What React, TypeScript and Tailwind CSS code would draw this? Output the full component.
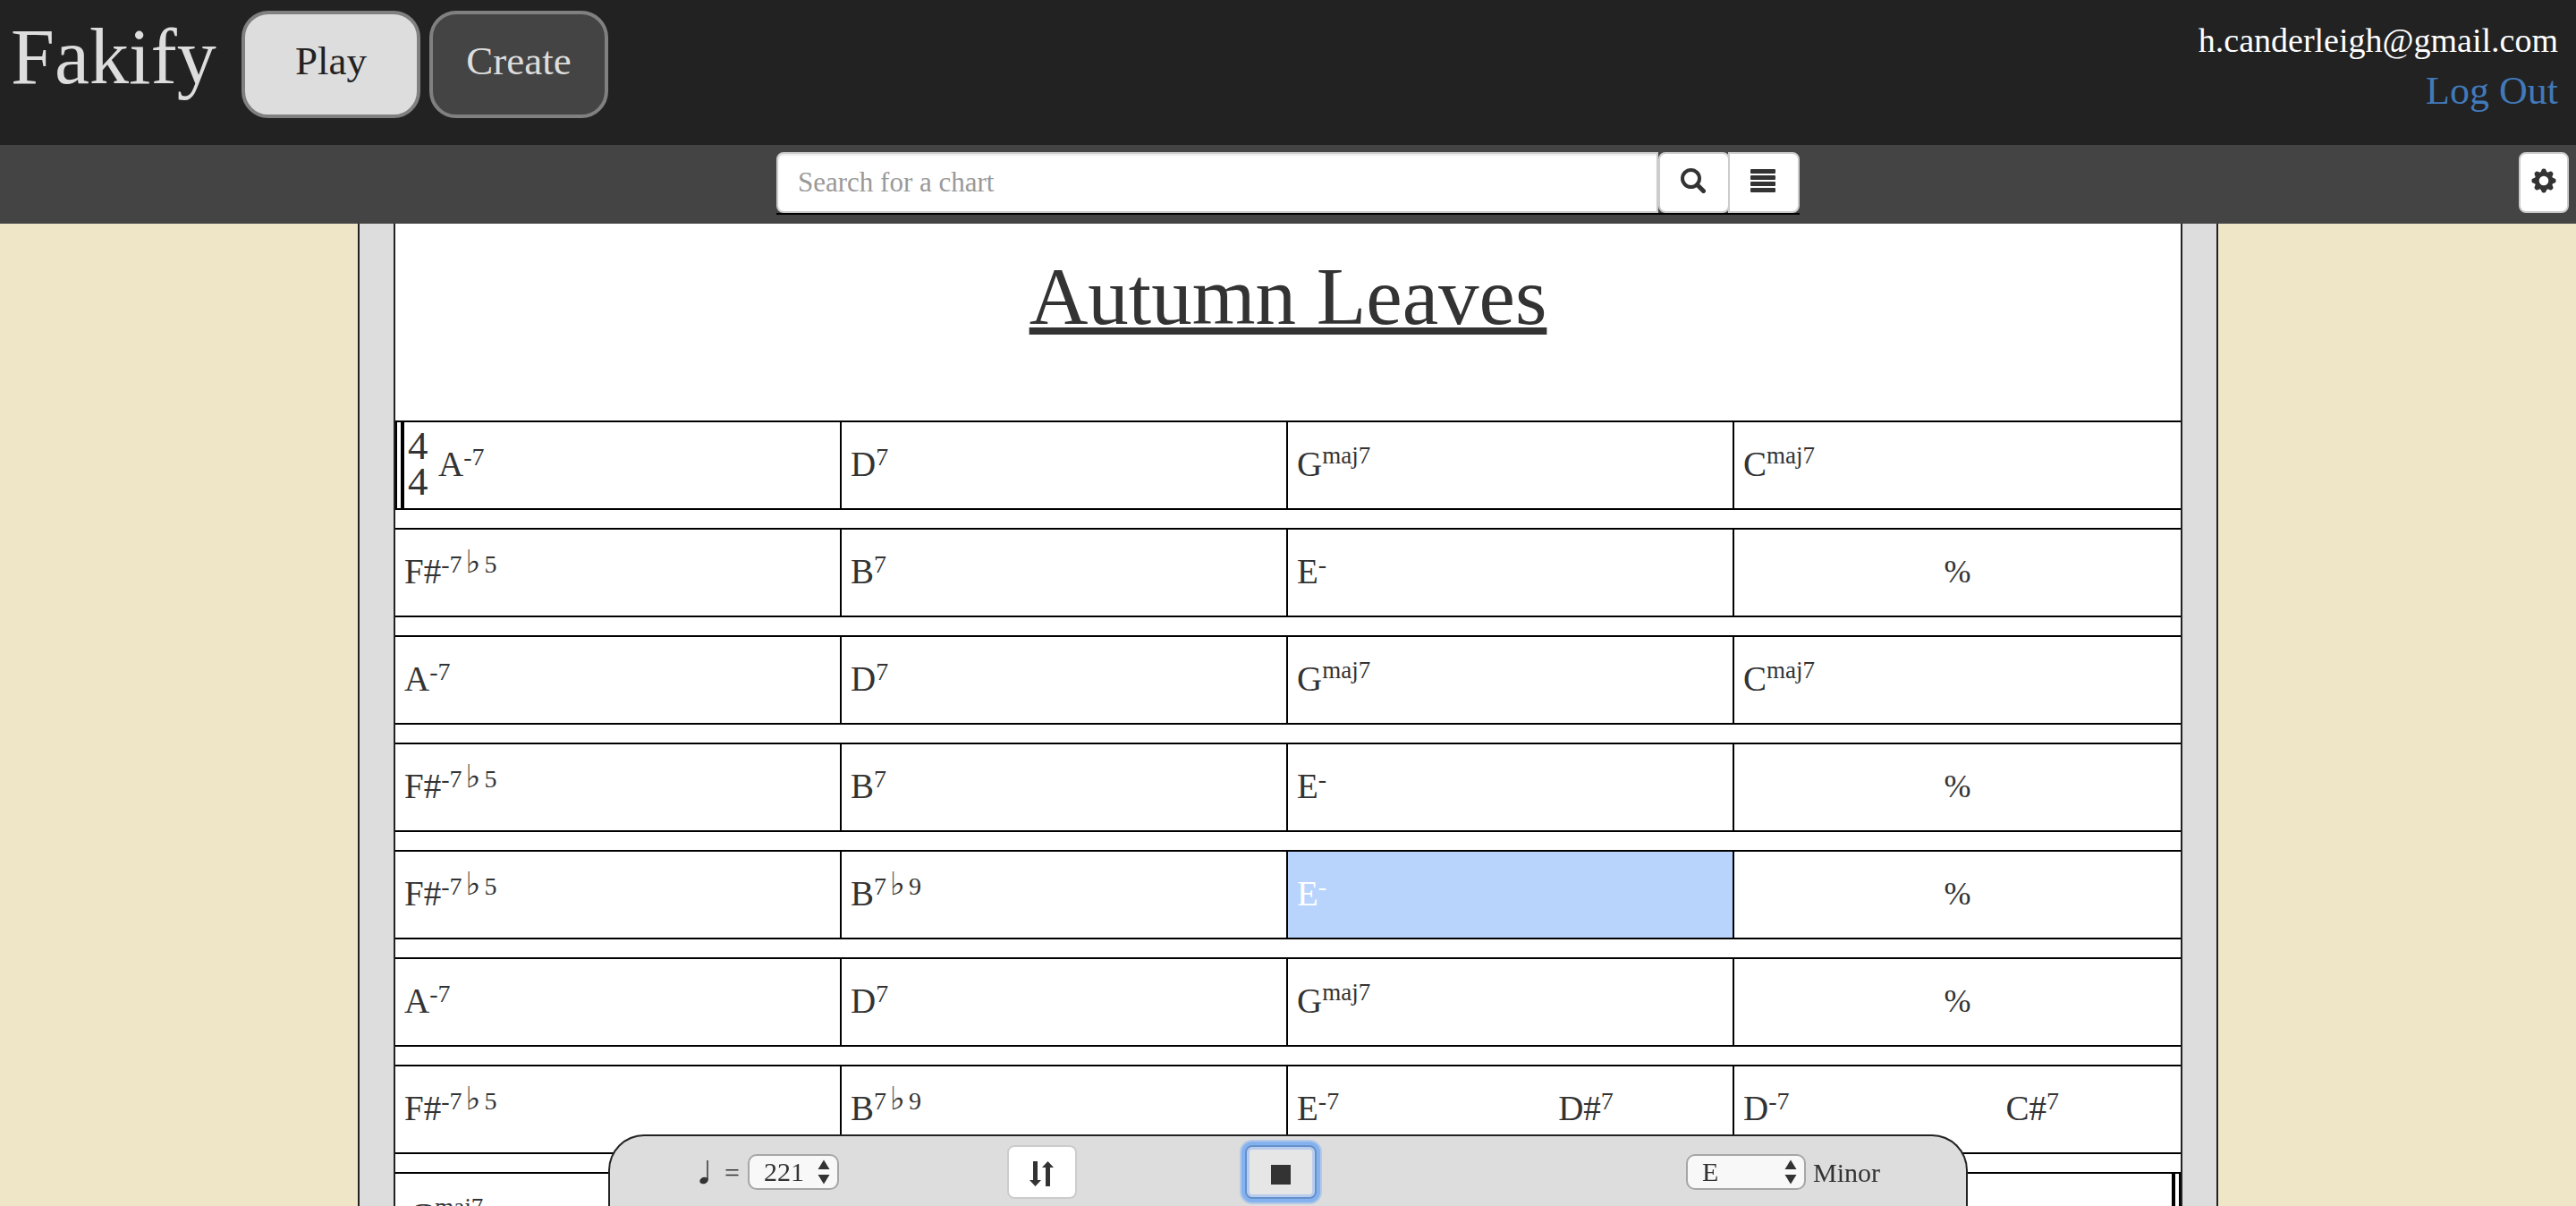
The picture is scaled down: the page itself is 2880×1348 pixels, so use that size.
import type { ReactNode } from "react";

type Chord = { root: string; sup?: string };
type Bar = Chord[] | "%";

const c = (root: string, sup?: string): Chord => ({ root, sup });

const rows: Bar[][] = [
  [[c("A", "-7")], [c("D", "7")], [c("G", "maj7")], [c("C", "maj7")]],
  [[c("F#", "-7♭5")], [c("B", "7")], [c("E", "-")], "%"],
  [[c("A", "-7")], [c("D", "7")], [c("G", "maj7")], [c("C", "maj7")]],
  [[c("F#", "-7♭5")], [c("B", "7")], [c("E", "-")], "%"],
  [[c("F#", "-7♭5")], [c("B", "7♭9")], [c("E", "-")], "%"],
  [[c("A", "-7")], [c("D", "7")], [c("G", "maj7")], "%"],
  [[c("F#", "-7♭5")], [c("B", "7♭9")], [c("E", "-7"), c("D#", "7")], [c("D", "-7"), c("C#", "7")]],
  [[c("G", "maj7")], [], [], []],
];

const ACTIVE_ROW = 4;
const ACTIVE_BAR = 2;

function ChordName({ root, sup }: Chord) {
  const parts = sup ? sup.split("♭") : [];
  const raise = sup?.startsWith("maj") ? "bottom-3.5 text-[27px]" : "bottom-3 text-[28px]";
  return (
    <span className="flex items-baseline whitespace-nowrap">
      {root}
      <sup className={`relative top-auto flex items-baseline leading-none ${raise}`}>
        {parts[0]}
        {parts.length > 1 && (
          <>
            <span className="px-1 font-['DejaVu_Sans',sans-serif] text-[36px] leading-none">♭</span>
            {parts[1]}
          </>
        )}
      </sup>
    </span>
  );
}

function BarCell({ bar, row, col }: { bar: Bar; row: number; col: number }) {
  const first = row === 0 && col === 0;
  const last = row === rows.length - 1;
  const active = row === ACTIVE_ROW && col === ACTIVE_BAR;
  return (
    <div
      className={`flex min-w-0 border-black ${col < 3 ? "border-r-2" : ""} ${active ? "bg-[#b8d4fd] text-white" : ""}`}
    >
      {first && (
        <>
          <span className="mr-1 border-l-2 border-black" />
          <span className="border-l-4 border-black" />
          <span className="flex w-[38px] flex-col justify-center pb-1 pl-1 text-[45px] leading-10">
            <span>4</span>
            <span>4</span>
          </span>
        </>
      )}
      {bar === "%" ? (
        <span className="flex flex-1 items-center justify-center pb-0.5 text-[36px]">%</span>
      ) : (
        <div
          className={`grid flex-1 items-center pb-0.5 ${first ? "" : last ? "pl-4" : "pl-2.5"} ${bar.length > 1 ? "grid-cols-[3fr_2fr]" : "grid-cols-1"}`}
        >
          {bar.map((ch, i) => (
            <ChordName key={i} {...ch} />
          ))}
        </div>
      )}
      {last && col === 3 && (
        <>
          <span className="mr-1 border-l-4 border-black" />
          <span className="border-l-2 border-black" />
        </>
      )}
    </div>
  );
}

function SearchIcon() {
  return (
    <svg viewBox="0 0 28 28" className="size-7" fill="none" stroke="currentColor" aria-hidden="true">
      <circle cx="11.5" cy="11.5" r="9.5" strokeWidth="4" />
      <path d="M18.5 18.5 L25.5 25.5" strokeWidth="5" strokeLinecap="round" />
    </svg>
  );
}

function ListIcon() {
  return (
    <svg viewBox="0 0 28 28" className="size-7" fill="currentColor" aria-hidden="true">
      {[1, 8, 15, 22].map((y) => (
        <rect key={y} x="0" y={y} width="28" height="5" rx="1" />
      ))}
    </svg>
  );
}

function GearIcon() {
  return (
    <svg viewBox="-14 -14 28 28" className="size-7" aria-hidden="true">
      <circle r="7.8" fill="none" stroke="currentColor" strokeWidth="5" />
      {[0, 45, 90, 135, 180, 225, 270, 315].map((a) => (
        <path key={a} d="M-4 -8.5 L-2.2 -12.6 Q-1.8 -13.6 0 -13.6 Q1.8 -13.6 2.2 -12.6 L4 -8.5Z" fill="currentColor" transform={`rotate(${a})`} />
      ))}
    </svg>
  );
}

function SwapIcon() {
  return (
    <svg viewBox="0 0 28 28" className="size-7" fill="currentColor" aria-hidden="true">
      <path d="M4 0H9V21H13L6.5 28L0 21H4Z" />
      <path d="M18 28H23V7H27L20.5 0L14 7H18Z" />
    </svg>
  );
}

function NoteIcon() {
  return (
    <svg viewBox="0 0 12 28" className="h-7 w-3" aria-label="Quarter note" role="img">
      <ellipse cx="5" cy="23.5" rx="4.8" ry="3.6" transform="rotate(-20 5 23.5)" fill="currentColor" />
      <path d="M9 23V1" stroke="currentColor" strokeWidth="1.5" />
    </svg>
  );
}

function Picker({ id, options, className }: { id: string; options: string[]; className: string }) {
  return (
    <span className="relative flex">
      <select
        id={id}
        className={`h-10 appearance-none rounded-[10px] border-2 border-[#a6a6a6] bg-[#f8f8f8] pl-4 leading-9 ${className}`}
      >
        {options.map((o) => (
          <option key={o}>{o}</option>
        ))}
      </select>
      <svg viewBox="0 0 14 28" className="pointer-events-none absolute top-1.5 right-2.5 h-7 w-3.5" fill="currentColor" aria-hidden="true">
        <path d="M7 0.5L13.5 11H0.5Z" />
        <path d="M7 27.5L13.5 17H0.5Z" />
      </svg>
    </span>
  );
}

function IconButton({ label, className, children }: { label: string; className: string; children: ReactNode }) {
  return (
    <button type="button" aria-label={label} className={`flex shrink-0 items-center justify-center ${className}`}>
      {children}
    </button>
  );
}

export default function App() {
  return (
    <div className="flex h-screen flex-col overflow-hidden bg-[#efe6c8] font-['Liberation_Serif',serif] text-[#333]">
      <header className="flex h-[162px] shrink-0 items-start bg-[#222]">
        <a href="#home" className="w-[270px] shrink-0 pt-3.5 pl-3 text-[88px] leading-[100px] text-[#ddd]">
          Fakify
        </a>
        <nav className="flex gap-2.5 pt-3 text-[45px]">
          <button type="button" className="h-[120px] w-[200px] rounded-[30px] border-4 border-[#808080] bg-[#ddd] pb-1.5 text-[#222]">
            Play
          </button>
          <button type="button" className="h-[120px] w-[200px] rounded-[30px] border-4 border-[#808080] bg-[#444] pb-1.5 text-[#ddd]">
            Create
          </button>
        </nav>
        <div className="ml-auto flex flex-col items-end pt-4 pr-5">
          <span className="text-[38px] leading-[58px] text-white">h.canderleigh@gmail.com</span>
          <a href="#logout" className="text-[44px] leading-[56px] text-[#4179b9]">
            Log Out
          </a>
        </div>
      </header>

      <div className="grid shrink-0 grid-cols-[1fr_1144px_1fr] bg-[#444] pt-2 pb-2.5">
        <form role="search" className="col-start-2 flex h-[70px] border-b-2 border-black">
          <input
            type="search"
            aria-label="Search for a chart"
            placeholder="Search for a chart"
            className="min-w-0 flex-1 rounded-l-lg border-2 border-[#ccc] bg-white px-[22px] text-[31px] shadow-[inset_0_2px_2px_rgba(0,0,0,0.075)] placeholder:text-[#999]"
          />
          <IconButton label="Search" className="w-20 rounded-lg border-2 border-[#ccc] bg-white pr-0.5 pb-1">
            <SearchIcon />
          </IconButton>
          <IconButton label="List charts" className="-ml-0.5 w-20 rounded-r-lg border-2 border-[#ccc] bg-white pr-0.5 pb-1">
            <ListIcon />
          </IconButton>
        </form>
        <IconButton label="Settings" className="mr-2 h-[68px] w-14 justify-self-end rounded-lg border-2 border-[#ccc] bg-white pb-1">
          <GearIcon />
        </IconButton>
      </div>

      <main className="mx-auto min-h-0 w-[2080px] max-w-full flex-1 overflow-hidden border-x-2 border-[#222] bg-[#ddd] px-[38px]">
        <article className="h-full border-x-2 border-[#222] bg-white">
          <h1 className="h-[220px] pt-8 text-center text-[91px] leading-[100px] underline decoration-8 underline-offset-4 [text-decoration-skip-ink:none]">
            Autumn Leaves
          </h1>
          <div className="flex flex-col gap-5 text-[39px]">
            {rows.map((row, r) => (
              <section key={r} className="grid h-[100px] grid-cols-4 border-y-2 border-black">
                {row.map((bar, i) => (
                  <BarCell key={i} bar={bar} row={r} col={i} />
                ))}
              </section>
            ))}
          </div>
        </article>
      </main>

      <footer className="fixed inset-x-0 bottom-0 mx-auto flex h-20 w-[1520px] max-w-full items-start gap-[188px] rounded-t-[40px] border-2 border-b-0 border-[#222] bg-[#ddd] pt-2.5 pr-24 pl-[100px] text-[30px]">
        <div className="flex h-[60px] items-center">
          <NoteIcon />
          <label htmlFor="tempo" className="mr-2 ml-4 w-[18px]">
            =
          </label>
          <Picker id="tempo" options={["221"]} className="w-[102px]" />
        </div>
        <IconButton label="Reverse order" className="h-[60px] w-[78px] rounded-lg border-2 border-[#ccc] bg-white pt-1">
          <SwapIcon />
        </IconButton>
        <IconButton
          label="Stop"
          className="h-[60px] w-20 rounded-lg border-2 border-[#6690cc] bg-[#e6e6e6] shadow-[inset_0_0_0_3px_#b8cdee,0_0_0_4px_#84b2ee,0_0_0_6px_#b4c8e6]"
        >
          <span className="mt-1.5 size-[22px] bg-[#333]" />
        </IconButton>
        <div className="ml-auto flex h-[60px] items-center gap-2">
          <Picker id="key" options={["E"]} className="w-[134px]" />
          <label htmlFor="key">Minor</label>
        </div>
      </footer>
    </div>
  );
}
